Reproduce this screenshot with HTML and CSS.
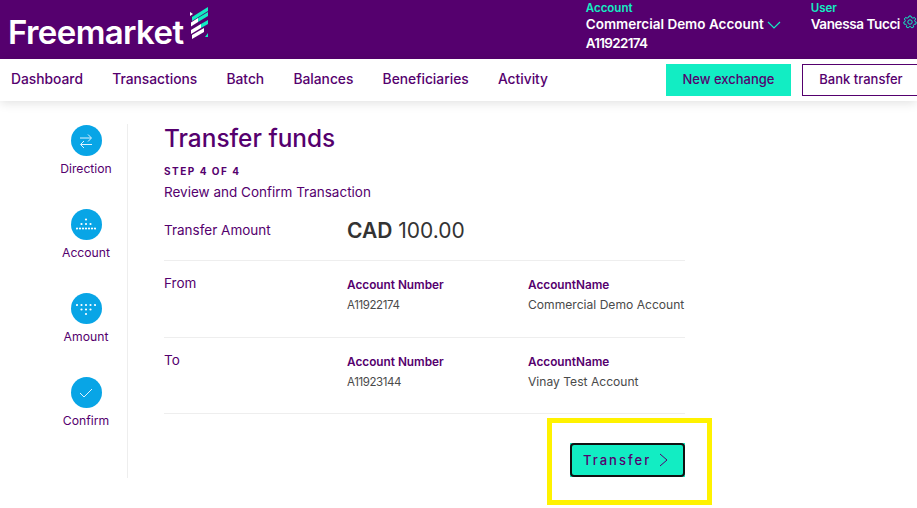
FILE: index.html
```html
<!DOCTYPE html>
<html lang="en">
<head>
  <meta charset="UTF-8">
  <title>Freemarket</title>
  <link rel="stylesheet" href="styles.css">
</head>
<body>

  <div class="topbar">
    <div class="logo">
      <span class="logo-text">Freemarket</span>
      <svg class="logo-mark" width="18" height="32" viewBox="0 0 18 32">
        <path d="M2 10 L18 0 V4 L2 14 Z" fill="#12edc3"/>
        <path d="M8 11 L18 5 V9 L8 15 Z" fill="#12edc3"/>
        <path d="M1 15.500 L8 11 V15 L1 19.500 Z" fill="#fff"/>
        <path d="M11 17 L18 13 V17 L11 21 Z" fill="#12edc3"/>
        <path d="M1 23 L11 17 V21 L1 27 Z" fill="#fff"/>
        <path d="M2 28 L14 21 V25 L2 32 Z" fill="#fff"/>
        <path d="M0 5 L3 7 L0 9 Z" fill="#fff"/>
        <path d="M18 26 V30 H15 Z" fill="#12edc3"/>
      </svg>
    </div>
    <div class="account">
      <div class="top-label">Account</div>
      <div class="top-value">Commercial Demo Account
        <svg width="14" height="8" viewBox="0 0 14 8"><path d="M1 1 L7 7 L13 1" fill="none" stroke="#12edc3" stroke-width="1.2"/></svg>
      </div>
      <div class="top-value top-id">A11922174</div>
    </div>
    <div class="user">
      <div class="top-label">User</div>
      <div class="top-value user-name">Vanessa Tucci
        <svg width="14" height="14" viewBox="0 0 14 14"><circle cx="7" cy="7" r="2.2" fill="none" stroke="#12edc3"/><path d="M6 1 H8 L8.400 2.500 L10 3.200 L11.400 2.400 L12.700 4 L11.700 5.200 L12 6.600 L13.300 7.200 L12.800 9.200 L11.300 9.200 L10.300 10.500 L10.700 12 L8.900 12.900 L7.900 11.700 L6.100 11.700 L5.100 12.900 L3.300 12 L3.700 10.500 L2.700 9.200 L1.200 9.200 L0.700 7.200 L2 6.600 L2.300 5.200 L1.300 4 L2.600 2.400 L4 3.200 L5.600 2.500 Z" fill="none" stroke="#12edc3"/></svg>
      </div>
    </div>
  </div>

  <div class="navbar">
    <div class="nav-links">
      <a class="nav-link">Dashboard</a>
      <a class="nav-link">Transactions</a>
      <a class="nav-link">Batch</a>
      <a class="nav-link">Balances</a>
      <a class="nav-link">Beneficiaries</a>
      <a class="nav-link">Activity</a>
    </div>
    <div class="nav-actions">
      <button class="btn-exchange">New exchange</button>
      <button class="btn-bank">Bank transfer</button>
    </div>
  </div>

  <div class="page">
    <div class="steps">
      <div class="step">
        <div class="step-icon">
          <svg width="18" height="18" viewBox="0 0 18 18" fill="none" stroke="#dff3ff" stroke-width="1">
            <path d="M3 6 H14 M11 2.500 L14.500 6 L11 9.500"/>
            <path d="M15 12.500 H4 M7 9 L3.500 12.500 L7 16"/>
          </svg>
        </div>
        <div class="step-label">Direction</div>
      </div>
      <div class="step">
        <div class="step-icon">
          <svg width="20" height="14" viewBox="0 0 20 14" fill="#fff">
            <circle cx="10" cy="1.500" r="1.100"/>
            <circle cx="5.500" cy="6" r="1.100"/><circle cx="10" cy="6" r="1.100"/><circle cx="14.500" cy="6" r="1.100"/>
            <circle cx="1" cy="10.500" r="1.100"/><circle cx="4" cy="10.500" r="1.100"/><circle cx="7" cy="10.500" r="1.100"/><circle cx="10" cy="10.500" r="1.100"/><circle cx="13" cy="10.500" r="1.100"/><circle cx="16" cy="10.500" r="1.100"/><circle cx="19" cy="10.500" r="1.100"/>
          </svg>
        </div>
        <div class="step-label">Account</div>
      </div>
      <div class="step">
        <div class="step-icon">
          <svg width="20" height="14" viewBox="0 0 20 14" fill="#fff">
            <circle cx="1" cy="3" r="1.100"/><circle cx="5.500" cy="3" r="1.100"/><circle cx="10" cy="3" r="1.100"/><circle cx="14.500" cy="3" r="1.100"/><circle cx="19" cy="3" r="1.100"/>
            <circle cx="5.500" cy="7.500" r="1.100"/><circle cx="10" cy="7.500" r="1.100"/><circle cx="14.500" cy="7.500" r="1.100"/>
            <circle cx="10" cy="12" r="1.100"/>
          </svg>
        </div>
        <div class="step-label">Amount</div>
      </div>
      <div class="step">
        <div class="step-icon">
          <svg width="14" height="10" viewBox="0 0 14 10" fill="none" stroke="#dff3ff" stroke-width="1">
            <path d="M1 5 L5 9 L13 1"/>
          </svg>
        </div>
        <div class="step-label">Confirm</div>
      </div>
    </div>

    <div class="content">
      <h1 class="title">Transfer funds</h1>
      <div class="step-count">STEP 4 OF 4</div>
      <div class="subtitle">Review and Confirm Transaction</div>

      <div class="row row-amount">
        <div class="row-name">Transfer Amount</div>
        <div class="amount"><b>CAD</b> 100.00</div>
      </div>

      <div class="row">
        <div class="row-name">From</div>
        <div class="col-number">
          <div class="field-head">Account Number</div>
          <div class="field-value">A11922174</div>
        </div>
        <div class="col-name">
          <div class="field-head">AccountName</div>
          <div class="field-value">Commercial Demo Account</div>
        </div>
      </div>

      <div class="row">
        <div class="row-name">To</div>
        <div class="col-number">
          <div class="field-head">Account Number</div>
          <div class="field-value">A11923144</div>
        </div>
        <div class="col-name">
          <div class="field-head">AccountName</div>
          <div class="field-value">Vinay Test Account</div>
        </div>
      </div>

      <div class="actions">
        <div class="highlight">
          <div class="btn-wrap">
            <button class="btn-transfer">Transfer
              <svg width="9" height="14" viewBox="0 0 9 14"><path d="M1 1 L8 7 L1 13" fill="none" stroke="#55006e" stroke-width="1"/></svg>
            </button>
          </div>
        </div>
      </div>
    </div>
  </div>

</body>
</html>
```

FILE: styles.css
```css
* {
  margin: 0;
  box-sizing: border-box;
  font-family: Inter, 'Open Sans', sans-serif;
}

html, body {
  height: 508px;
  overflow: hidden;
}

body {
  background-color: #fff;
  color: #55006e;
}

/* Top bar */
.topbar {
  display: flex;
  height: 59px;
  background-color: #55006e;
  color: #fff;
}

.logo {
  display: flex;
  align-items: flex-start;
  width: 586px;
  padding: 8px 0 0 8px;
}

.logo-text {
  font-size: 33px;
  font-weight: 600;
  line-height: 48px;
  letter-spacing: -0.6px;
}

.logo-mark {
  margin-left: 6px;
  margin-top: -1px;
}

.account {
  width: 225px;
  padding-top: 2px;
}

.user {
  padding-top: 2px;
}

.top-label {
  font-size: 11.500px;
  font-weight: 600;
  line-height: 13px;
  color: #12edc3;
}

.top-value {
  font-size: 13.500px;
  font-weight: 600;
  line-height: 19px;
  white-space: nowrap;
}

.top-id {
  letter-spacing: -0.7px;
}

.user-name {
  letter-spacing: -0.4px;
}

/* Nav */
.navbar {
  display: flex;
  justify-content: space-between;
  height: 42px;
  padding: 5px 0 0 11px;
  background-color: #fff;
  box-shadow: 0 2px 10px rgba(0,0,0,0.12);
}

.nav-links {
  display: flex;
  gap: 29.200px;
  padding-top: 7px;
}

.nav-link {
  font-size: 13.800px;
  font-weight: 500;
  line-height: 17px;
  color: #55006e;
}

.nav-actions {
  display: flex;
  gap: 11px;
  margin-right: -3px;
}

.nav-actions button {
  height: 32px;
  padding: 0 0 2px;
  font-size: 13px;
  font-weight: 500;
  color: #55006e;
  border-radius: 0;
}

.btn-exchange {
  width: 125px;
  background-color: #12edc3;
  border: none;
}

.btn-bank {
  width: 118px;
  background-color: #fff;
  border: 1px solid #55006e;
}

/* Page */
.page {
  display: flex;
  padding-top: 23px;
}

.steps {
  width: 128px;
  height: 354px;
  padding: 1px 0 0 45px;
  border-right: 1px solid #eeeeee;
}

.step {
  display: flex;
  flex-direction: column;
  align-items: center;
  width: 82px;
  height: 84px;
}

.step-icon {
  display: flex;
  align-items: center;
  justify-content: center;
  flex-shrink: 0;
  width: 31px;
  height: 31px;
  border-radius: 50%;
  background-color: #08a5e6;
}

.step-label {
  margin-top: 5px;
  font-size: 12.200px;
  line-height: 15px;
  color: #55006e;
}

.content {
  width: 521px;
  margin-left: 36px;
}

.title {
  font-size: 24.400px;
  font-weight: 500;
  line-height: 28px;
  color: #55006e;
}

.step-count {
  margin-top: 12px;
  font-size: 10px;
  font-weight: 700;
  letter-spacing: 1.500px;
  line-height: 14px;
}

.subtitle {
  margin-top: 6px;
  font-size: 13.500px;
  line-height: 16px;
}

.row {
  display: flex;
  height: 76.500px;
  border-bottom: 1px solid #eeeeee;
  padding-top: 14px;
}

.row-amount {
  height: 61px;
  padding-top: 22px;
}

.row-name {
  width: 183px;
  font-size: 13.500px;
  line-height: 16px;
}

.amount {
  font-size: 21px;
  line-height: 26px;
  color: #333;
  margin-top: -4px;
}

.amount b {
  font-weight: 600;
}

.col-number {
  width: 181px;
}

.field-head {
  margin-top: 3px;
  font-size: 11.800px;
  font-weight: 600;
  line-height: 15px;
  color: #55006e;
}

.field-value {
  margin-top: 5px;
  font-size: 12.100px;
  line-height: 14px;
  color: #4a4a4a;
  white-space: nowrap;
}

.col-number .field-value {
  font-size: 11.500px;
  letter-spacing: -0.4px;
}

.actions {
  display: flex;
  justify-content: flex-end;
  margin-right: -27px;
  padding-top: 4px;
}

.highlight {
  width: 165px;
  height: 87px;
  border: 5px solid #fff200;
  padding: 20px 0 0 18px;
}

.btn-wrap {
  width: 115px;
  height: 34px;
  background-color: #12edc3;
}

.btn-transfer {
  display: flex;
  align-items: center;
  gap: 8px;
  width: 115px;
  height: 34px;
  padding-left: 11px;
  background-color: #12edc3;
  border: 2px solid #111;
  border-radius: 4px;
  font-size: 13px;
  font-weight: 500;
  letter-spacing: 2px;
  color: #55006e;
}
```
